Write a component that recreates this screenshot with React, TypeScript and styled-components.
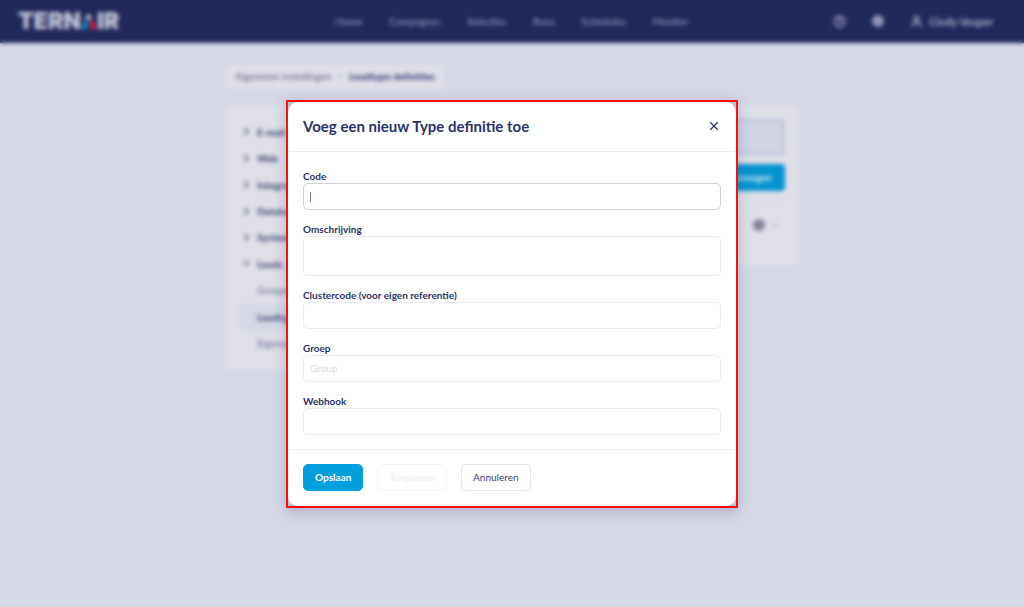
import React from "react";
import styled, { createGlobalStyle, css } from "styled-components";
import { ChevronDown, ChevronRight, HelpCircle, Settings, User, X } from "lucide-react";

const color = {
  navy: "#20275b",
  ink: "#2b3467",
  page: "#d5d8e6",
  panel: "#dfdfe8",
  blue: "#00a0dc",
  line: "#ebebf1",
};

const GlobalStyle = createGlobalStyle`
  * { box-sizing: border-box; }
  body {
    margin: 0;
    background: ${color.page};
    color: ${color.ink};
    font-family: Lato, "Liberation Sans", sans-serif;
    font-size: 10px;
  }
  button, input, textarea { font: inherit; color: inherit; }
  a { color: inherit; text-decoration: none; }
  ul { list-style: none; margin: 0; padding: 0; }
`;

const Page = styled.div`
  min-height: 100vh;
  background: ${color.page};
`;

const TopBar = styled.header`
  display: grid;
  grid-template-columns: 1fr auto 1fr;
  align-items: center;
  height: 43px;
  padding: 0 18px 1px;
  background: ${color.navy};
  color: #a9acc9;
`;

const Logo = styled.a`
  display: flex;
  align-items: center;
  font-family: Inter, sans-serif;
  font-size: 23px;
  line-height: 24px;
  font-weight: 900;
  color: #c6c8da;
`;

const MainNav = styled.nav`
  display: flex;
  gap: 27px;
  color: #a3a6c4;
`;

const Account = styled.div`
  display: flex;
  justify-content: flex-end;
  align-items: center;
  gap: 26px;
  padding-right: 13px;
`;

const IconButton = styled.button`
  display: flex;
  padding: 0;
  border: 0;
  background: none;
`;

const UserLink = styled.a`
  display: flex;
  align-items: center;
  gap: 6px;
  font-size: 11px;
  font-weight: 700;
`;

const Content = styled.div`
  max-width: 572px;
  margin: 0 auto;
  padding-top: 22px;
`;

const Breadcrumb = styled.nav`
  display: inline-flex;
  align-items: center;
  gap: 5px;
  height: 24px;
  padding: 0 9px 2px;
  border-radius: 3px;
  background: ${color.panel};
  color: #5c6088;
  svg { color: #5fb4d4; }
`;

const Current = styled.a`
  font-weight: 900;
  color: #40467a;
`;

const Columns = styled.div`
  display: grid;
  grid-template-columns: 160px 1fr;
  align-items: start;
  gap: 16px;
  margin-top: 17px;
`;

const Panel = styled.section`
  padding: 13px;
  border-radius: 4px;
  background: ${color.panel};
`;

const SideList = styled.ul`
  display: grid;
  grid-auto-rows: 1fr;
  min-height: 238px;
`;

const SideLink = styled.a<{ $child?: boolean; $selected?: boolean }>`
  display: flex;
  align-items: center;
  gap: 5px;
  height: 100%;
  padding-bottom: 1px;
  padding-left: ${(p) => (p.$child ? 18 : 2)}px;
  border-radius: 3px;
  color: ${(p) => (p.$child && !p.$selected ? "#666990" : "#484d7b")};
  font-weight: ${(p) => (p.$child && !p.$selected ? 400 : 900)};
  background: ${(p) => (p.$selected ? color.page : "transparent")};
`;

const Search = styled.input`
  display: block;
  width: 100%;
  height: 36px;
  border: 3px solid #c0c8de;
  border-radius: 4px;
  background: #d1d5e4;
`;

const AddRow = styled.div`
  display: flex;
  justify-content: flex-end;
  padding: 9px 0 14px;
  border-bottom: 1px solid #d0d1dd;
`;

const AddButton = styled.button`
  height: 27px;
  padding: 0 13px 2px;
  border: 0;
  border-radius: 4px;
  background: #0593cf;
  color: #d0e8f4;
  font-weight: 700;
`;

const RowActions = styled.div`
  display: flex;
  align-items: center;
  justify-content: flex-end;
  gap: 6px;
  height: 46px;
  padding: 0 6px 9px 0;
  color: #83849a;
`;

const Overlay = styled.div`
  position: fixed;
  inset: 0;
  display: flex;
  align-items: flex-start;
  justify-content: center;
  padding: 100px 16px;
  overflow: auto;
  backdrop-filter: blur(2px);
`;

const Frame = styled.div`
  width: 100%;
  max-width: 452px;
  border: 2px solid #fb0d14;
  background: #bfc1d2;
  box-shadow: 0 3px 12px rgba(60, 66, 110, 0.28);
`;

const Dialog = styled.form`
  border-radius: 10px;
  background: #fff;
`;

const DialogHeader = styled.header`
  display: flex;
  align-items: center;
  justify-content: space-between;
  height: 50px;
  padding: 0 15px 2px;
  border-bottom: 1px solid ${color.line};
`;

const Title = styled.h1`
  margin: 0;
  font-size: 15px;
  line-height: 20px;
  font-weight: 700;
`;

const Fields = styled.div`
  display: flex;
  flex-direction: column;
  gap: 14px;
  padding: 19px 15px 14px;
`;

const Field = styled.label`
  display: flex;
  flex-direction: column;
  gap: 1px;
  font-weight: 700;
  line-height: 11px;
`;

const control = css`
  width: 100%;
  padding: 0 6px 2px;
  border: 1px solid ${color.line};
  border-radius: 5px;
  outline: 0;
  background: #fff;
  font-weight: 400;
`;

const TextBox = styled.input<{ $active?: boolean }>`
  ${control}
  height: 27px;
  &::placeholder { color: #dcdce6; opacity: 1; }
  ${(p) =>
    p.$active &&
    css`
      border-color: #cfcfdc;
      caret-color: transparent;
      background: linear-gradient(#7a7fa2, #7a7fa2) 6px center / 1px 10px no-repeat #fff;
    `}
`;

const TextArea = styled.textarea`
  ${control}
  display: block;
  height: 40px;
  resize: none;
`;

const DialogFooter = styled.footer`
  display: flex;
  gap: 14px;
  padding: 14px 15px 15px;
  border-top: 1px solid ${color.line};
`;

const Button = styled.button<{ $primary?: boolean }>`
  height: 27px;
  padding: 0 11px 2px;
  border: 1px solid ${(p) => (p.$primary ? color.blue : "#e6e6ed")};
  border-radius: 5px;
  background: ${(p) => (p.$primary ? color.blue : "#fff")};
  color: ${(p) => (p.$primary ? "#fff" : "#3c4376")};
  font-weight: ${(p) => (p.$primary ? 700 : 400)};
  &:disabled { color: #ececf1; border-color: #f4f4f7; }
`;

const navItems = ["Home", "Campagnes", "Selecties", "Runs", "Schedules", "Monitor"];

const sideItems = [
  { label: "E-mail" },
  { label: "Web" },
  { label: "Integraties" },
  { label: "Database" },
  { label: "Systeem" },
  { label: "Leads", open: true },
  { label: "Groepen", child: true },
  { label: "Leadtype definities", child: true, selected: true },
  { label: "Eigenaren", child: true },
];

export default function App() {
  return (
    <>
      <GlobalStyle />
      <Page>
        <TopBar>
          <Logo href="#" aria-label="Ternair">
            TERN
            <svg width="16" height="19" viewBox="0 0 17 19" aria-hidden="true">
              <circle cx="8" cy="5" r="3" fill="#c6c8da" />
              <path d="M4 8 8 11 6 18H0Z" fill="#0893cf" />
              <path d="M13 8 9 11 10 18H17Z" fill="#d81f45" />
            </svg>
            IR
          </Logo>
          <MainNav>
            {navItems.map((item) => (
              <a href="#" key={item}>{item}</a>
            ))}
          </MainNav>
          <Account>
            <IconButton aria-label="Help"><HelpCircle size={13} strokeWidth={4} color="#8083a8" /></IconButton>
            <IconButton aria-label="Instellingen"><Settings size={12} strokeWidth={5} color="#9a9dbc" /></IconButton>
            <UserLink href="#"><User size={13} strokeWidth={3} />Cindy Vesper</UserLink>
          </Account>
        </TopBar>
        <Content>
          <Breadcrumb aria-label="Kruimelpad">
            <a href="#">Algemene instellingen</a>
            <ChevronRight size={8} strokeWidth={3} />
            <Current href="#">Leadtype definities</Current>
          </Breadcrumb>
          <Columns>
            <Panel as="nav">
              <SideList>
                {sideItems.map((item) => (
                  <li key={item.label}>
                    <SideLink href="#" $child={item.child} $selected={item.selected}>
                      {!item.child && (item.open
                        ? <ChevronDown size={11} strokeWidth={3} />
                        : <ChevronRight size={11} strokeWidth={3} />)}
                      {item.label}
                    </SideLink>
                  </li>
                ))}
              </SideList>
            </Panel>
            <Panel>
              <Search aria-label="Zoeken" />
              <AddRow><AddButton>Toevoegen</AddButton></AddRow>
              <RowActions>
                <Settings size={12} strokeWidth={6} />
                <ChevronDown size={8} strokeWidth={3} />
              </RowActions>
            </Panel>
          </Columns>
        </Content>
      </Page>
      <Overlay>
        <Frame>
          <Dialog role="dialog" aria-modal="true" aria-labelledby="dialog-title" onSubmit={(e) => e.preventDefault()}>
            <DialogHeader>
              <Title id="dialog-title">Voeg een nieuw Type definitie toe</Title>
              <IconButton type="button" aria-label="Sluiten"><X size={14} strokeWidth={2} /></IconButton>
            </DialogHeader>
            <Fields>
              <Field>Code<TextBox $active /></Field>
              <Field>Omschrijving<TextArea /></Field>
              <Field>Clustercode (voor eigen referentie)<TextBox /></Field>
              <Field>Groep<TextBox placeholder="Group" /></Field>
              <Field>Webhook<TextBox /></Field>
            </Fields>
            <DialogFooter>
              <Button $primary type="submit">Opslaan</Button>
              <Button type="button" disabled>Toepassen</Button>
              <Button type="button">Annuleren</Button>
            </DialogFooter>
          </Dialog>
        </Frame>
      </Overlay>
    </>
  );
}
